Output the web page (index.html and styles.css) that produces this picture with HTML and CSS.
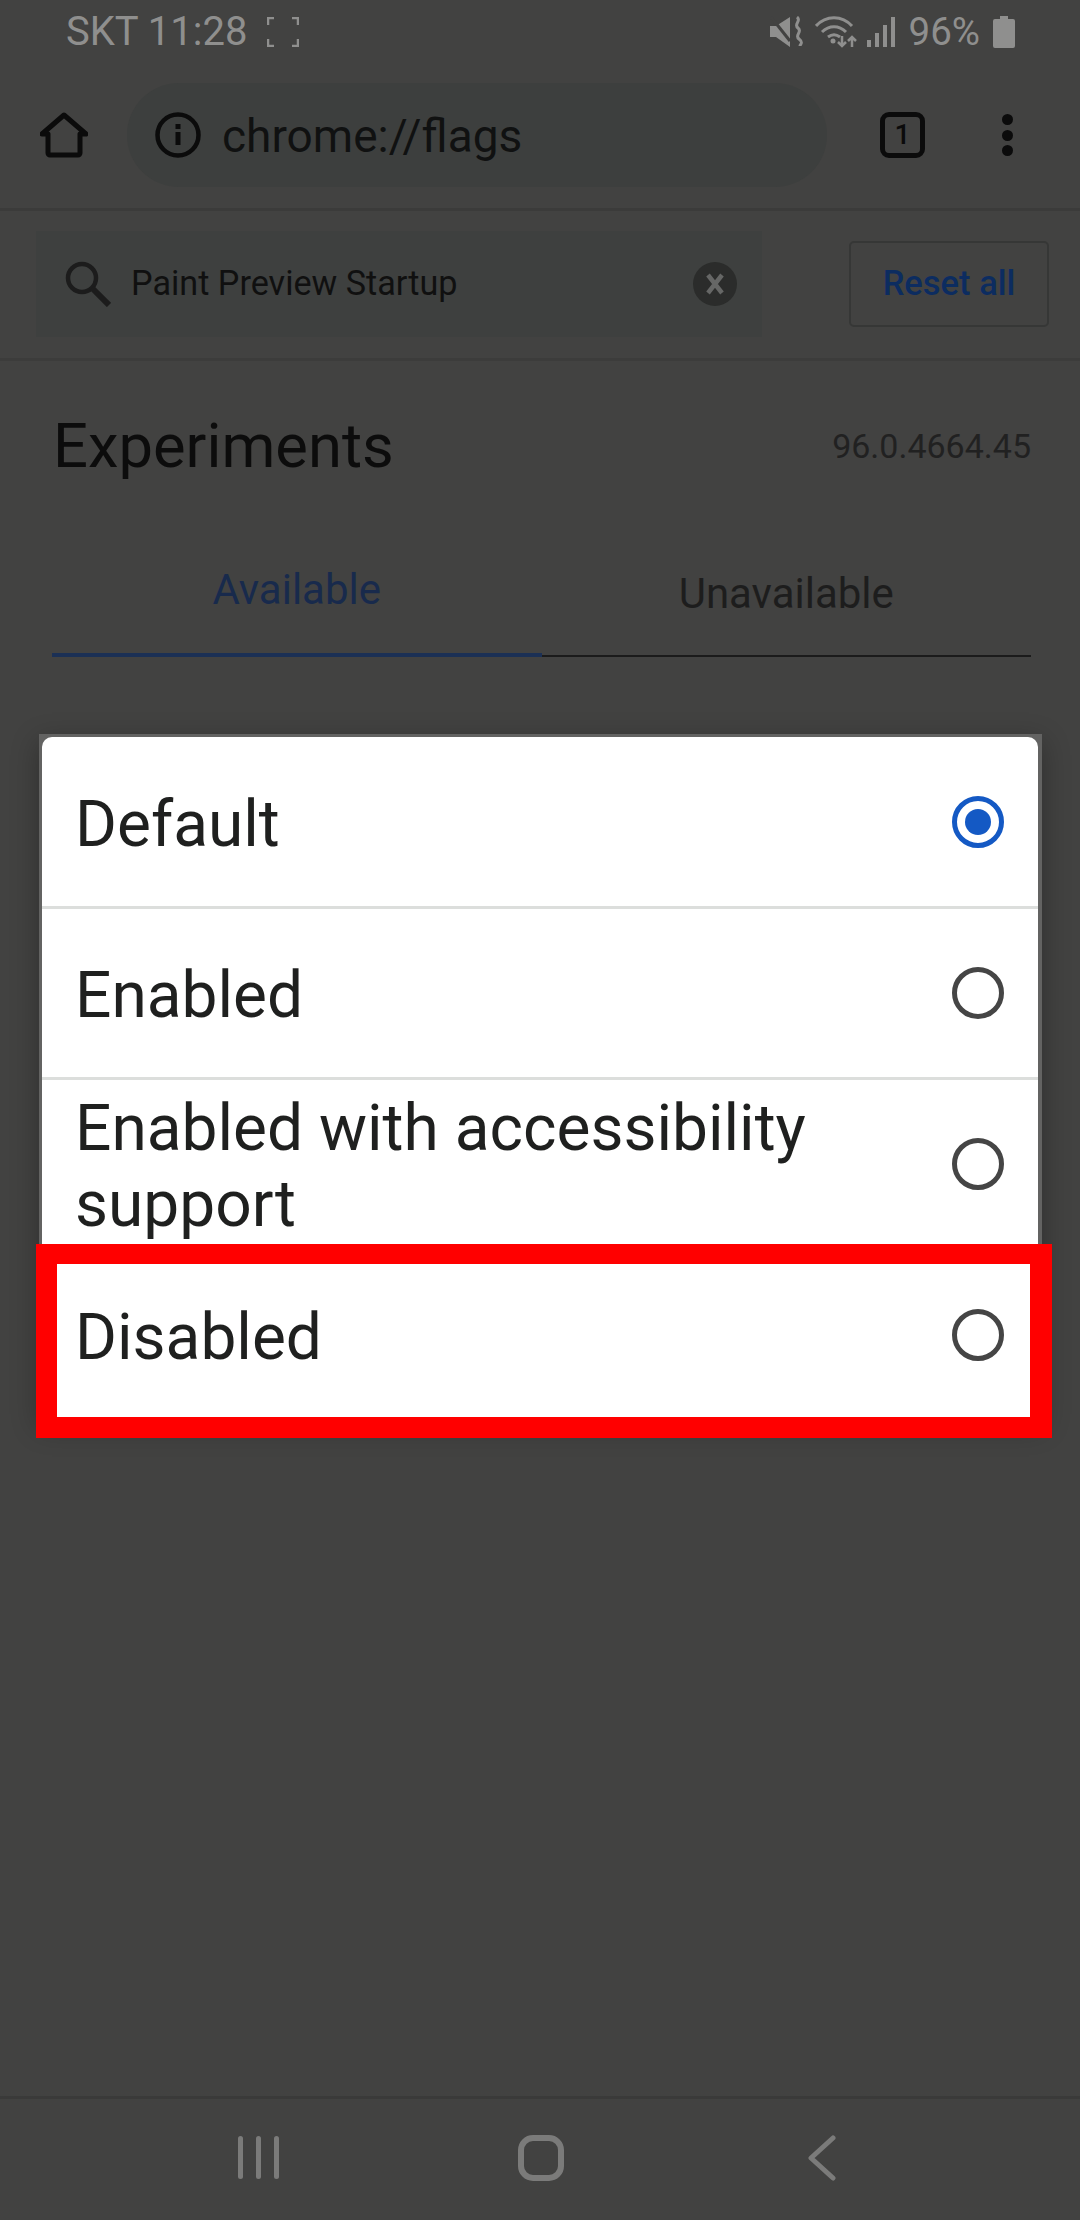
FILE: index.html
```html
<!DOCTYPE html>
<html lang="en">
<head>
    <meta charset="UTF-8">
    <title>chrome://flags</title>
    <link rel="stylesheet" href="styles.css">
</head>
<body>
    <div class="phone">
        <div class="statusbar">
            <div class="status-left">
                <span>SKT 11:28</span>
                <svg class="icon-capture" width="32" height="30" viewBox="0 0 32 30" fill="none" stroke="#8f8f8e" stroke-width="2.5">
                    <path d="M1 8V1h6M25 1h6v7M31 22v7h-6M7 29H1v-7"/>
                </svg>
            </div>
            <div class="status-right">
                <svg width="33" height="32" viewBox="0 0 33 32">
                    <path d="M0 10h6L20 1v30L6 21H0z" fill="#8f8f8e"/>
                    <path d="M1 1l19 24" stroke="#424241" stroke-width="3"/>
                    <path d="M27 1c5 4-4 7 1 11s-4 7 1 11 1 5 1 7" fill="none" stroke="#8f8f8e" stroke-width="3"/>
                </svg>
                <svg class="icon-wifi" width="42" height="32" viewBox="0 0 42 32" fill="none" stroke="#8f8f8e" stroke-width="3">
                    <path d="M1 10c10-11 26-11 36 0M7 16c7-7 17-7 24 0M13 21c4-3 8-3 12 0"/>
                    <circle cx="18" cy="25" r="2.5" fill="#8f8f8e" stroke="none"/>
                    <path d="M27 20v10M23 26l4 4 4-4M37 31V21M33 25l4-4 4 4" stroke-width="2.5"/>
                </svg>
                <svg class="icon-signal" width="28" height="30" viewBox="0 0 28 30" fill="#8f8f8e">
                    <rect x="0" y="23" width="4" height="7"/>
                    <rect x="8" y="16" width="4" height="14"/>
                    <rect x="16" y="8" width="4" height="22"/>
                    <rect x="24" y="0" width="4" height="30"/>
                </svg>
                <span class="battery-pct">96%</span>
                <svg width="22" height="32" viewBox="0 0 22 32" fill="#8f8f8e">
                    <path d="M7 0h8v3h5a2 2 0 0 1 2 2v25a2 2 0 0 1-2 2H2a2 2 0 0 1-2-2V5a2 2 0 0 1 2-2h5z"/>
                </svg>
            </div>
        </div>

        <div class="toolbar">
            <svg class="icon-home" width="48" height="46" viewBox="0 0 48 46" fill="none" stroke="#0b0b0b" stroke-width="5" stroke-linejoin="round">
                <path d="M2 22L24 3l22 19h-6v19a2 2 0 0 1-2 2H10a2 2 0 0 1-2-2V22z"/>
            </svg>
            <div class="omnibox">
                <svg width="46" height="46" viewBox="0 0 46 46">
                    <circle cx="23" cy="23" r="20.5" fill="none" stroke="#0b0b0b" stroke-width="4.5"/>
                    <rect x="20.5" y="20" width="5" height="13" fill="#0b0b0b"/>
                    <rect x="20.5" y="12" width="5" height="5" fill="#0b0b0b"/>
                </svg>
                <span class="url">chrome://flags</span>
            </div>
            <div class="tabcount">1</div>
            <div class="menu-dots"><i></i><i></i><i></i></div>
        </div>

        <div class="searchrow">
            <div class="searchbox">
                <svg width="46" height="46" viewBox="0 0 46 46" fill="none" stroke="#1c1c1c">
                    <circle cx="17" cy="17" r="14" stroke-width="4.5"/>
                    <path d="M27 27l17 17" stroke-width="6"/>
                </svg>
                <span class="searchtext">Paint Preview Startup</span>
                <div class="clear">
                    <svg width="20" height="24" viewBox="0 0 20 24" stroke="#666766" stroke-width="4.5">
                        <path d="M3 3l14 18M17 3L3 21"/>
                    </svg>
                </div>
            </div>
            <div class="resetbtn">Reset all</div>
        </div>

        <div class="heading">
            <h1>Experiments</h1>
            <span class="version">96.0.4664.45</span>
        </div>

        <div class="tabs">
            <div class="tab tab-active">Available</div>
            <div class="tab">Unavailable</div>
        </div>

        <div class="spacer"></div>

        <div class="navbar">
            <div class="nav-recents"><i></i><i></i><i></i></div>
            <div class="nav-home"></div>
            <svg width="28" height="46" viewBox="0 0 28 46" fill="none" stroke="#7b7b7a" stroke-width="5" stroke-linecap="round" stroke-linejoin="round">
                <path d="M25 3L3 23l22 20"/>
            </svg>
        </div>

        <div class="dialog-frame">
            <div class="dialog">
                <div class="option">
                    <span class="option-label">Default</span>
                    <span class="radio radio-on"></span>
                </div>
                <div class="option">
                    <span class="option-label">Enabled</span>
                    <span class="radio"></span>
                </div>
                <div class="option">
                    <span class="option-label">Enabled with accessibility support</span>
                    <span class="radio"></span>
                </div>
                <div class="option">
                    <span class="option-label">Disabled</span>
                    <span class="radio"></span>
                </div>
            </div>
        </div>

        <div class="highlight"></div>
    </div>
</body>
</html>
```

FILE: styles.css
```css
* {
    box-sizing: border-box;
}
body {
    margin: 0;
    background: #424241;
    font-family: Roboto, sans-serif;
}
.phone {
    position: relative;
    width: 1080px;
    height: 2220px;
    display: flex;
    flex-direction: column;
    background: #424241;
    overflow: hidden;
}
.statusbar {
    height: 62px;
    padding: 13px 65px 0 66px;
    display: flex;
    justify-content: space-between;
    align-items: flex-start;
    color: #8f8f8e;
    font-size: 40px;
    line-height: 37px;
}
.status-left {
    display: flex;
    align-items: center;
    gap: 20px;
}
.status-right {
    display: flex;
    align-items: center;
}
.icon-wifi {
    margin-left: 12px;
}
.icon-signal {
    margin-left: 10px;
}
.battery-pct {
    margin: 0 13px 0 14px;
    font-size: 38.5px;
}
.toolbar {
    height: 149px;
    padding: 22px 0 22px 40px;
    display: flex;
    align-items: center;
    border-bottom: 3px solid #3b3b3a;
}
.omnibox {
    flex: none;
    width: 700px;
    height: 104px;
    margin-left: 39px;
    padding-left: 28px;
    display: flex;
    align-items: center;
    gap: 21px;
    background: #3d3f3e;
    border-radius: 52px;
}
.url {
    margin-top: 2px;
    font-size: 46px;
    color: #101111;
}
.tabcount {
    flex: none;
    width: 45px;
    height: 46px;
    margin-left: 53px;
    border: 5px solid #0b0b0b;
    border-radius: 9px;
    text-align: center;
    font-size: 28px;
    line-height: 35px;
    font-weight: 500;
    color: #0b0b0b;
}
.menu-dots {
    margin-left: 77px;
    height: 42px;
    display: flex;
    flex-direction: column;
    justify-content: space-between;
}
.menu-dots i {
    display: block;
    width: 11px;
    height: 11px;
    border-radius: 50%;
    background: #0b0b0b;
}
.searchrow {
    height: 150px;
    padding: 20px 31px 0 36px;
    display: flex;
    justify-content: space-between;
    align-items: flex-start;
    border-bottom: 3px solid #3c3c3b;
}
.searchbox {
    width: 726px;
    height: 106px;
    padding: 0 25px 0 29px;
    display: flex;
    align-items: center;
    background: #3e403f;
}
.searchtext {
    flex: 1;
    margin-left: 20px;
    margin-bottom: 2px;
    font-size: 34.2px;
    color: #101010;
}
.clear {
    width: 44px;
    height: 44px;
    display: flex;
    align-items: center;
    justify-content: center;
    border-radius: 50%;
    background: #2b2c2b;
}
.resetbtn {
    width: 200px;
    height: 86px;
    margin-top: 10px;
    border: 2px solid #363736;
    border-radius: 5px;
    text-align: center;
    line-height: 80px;
    font-size: 34.5px;
    font-weight: 500;
    color: #0c2c60;
}
.heading {
    padding: 50px 49px 0 53px;
    display: flex;
    justify-content: space-between;
    align-items: center;
}
h1 {
    margin: 0;
    font-size: 61.5px;
    line-height: 70px;
    font-weight: 400;
    color: #0c0c0c;
}
.version {
    font-size: 34px;
    color: #212121;
}
.tabs {
    margin: 86px 49px 0 52px;
    display: flex;
    align-items: flex-end;
}
.tab {
    flex: 1;
    height: 88px;
    padding-top: 2px;
    text-align: center;
    font-size: 42px;
    line-height: 46px;
    color: #1d1d1d;
    border-bottom: 2px solid #1b1b1b;
}
.tab-active {
    height: 90px;
    color: #182a4c;
    border-bottom: 4px solid #1b3055;
    padding-top: 0;
}
.spacer {
    flex: 1;
}
.navbar {
    height: 124px;
    padding: 0 244px 4px 238px;
    display: flex;
    align-items: center;
    justify-content: space-between;
    border-top: 3px solid #3a3a39;
}
.nav-recents {
    width: 41px;
    height: 43px;
    display: flex;
    justify-content: space-between;
}
.nav-recents i {
    width: 5px;
    border-radius: 3px;
    background: #7b7b7a;
}
.nav-home {
    width: 46px;
    height: 46px;
    margin-right: 6px;
    border: 6px solid #7b7b7a;
    border-radius: 15px;
}
/* dialog and callout sit on top of the dimmed page */
.dialog-frame {
    position: absolute;
    left: 39px;
    top: 734px;
    width: 1003px;
    padding: 3px 4px 0 3px;
    background: #636362;
    box-shadow: 0 8px 26px rgba(0, 0, 0, 0.3);
}
.dialog {
    background: #fff;
    border-radius: 10px 10px 0 0;
}
.option {
    height: 171px;
    padding: 0 34px 0 33px;
    display: flex;
    align-items: center;
    justify-content: space-between;
    gap: 60px;
    font-size: 64px;
    line-height: 76px;
    color: #1f201f;
    border-top: 3px solid #dcdedc;
}
.option:first-child {
    height: 169px;
    border-top: none;
}
.option-label {
    margin-top: 6px;
}
.radio {
    flex: none;
    width: 52px;
    height: 52px;
    border: 5px solid #454545;
    border-radius: 50%;
}
.radio-on {
    position: relative;
    border-color: #1459c4;
}
.radio-on::after {
    content: "";
    position: absolute;
    left: 8px;
    top: 8px;
    width: 26px;
    height: 26px;
    border-radius: 50%;
    background: #1459c4;
}
.highlight {
    position: absolute;
    left: 36px;
    top: 1244px;
    width: 1016px;
    height: 194px;
    border: solid #ff0000;
    border-width: 20px 22px 21px 21px;
}
```
